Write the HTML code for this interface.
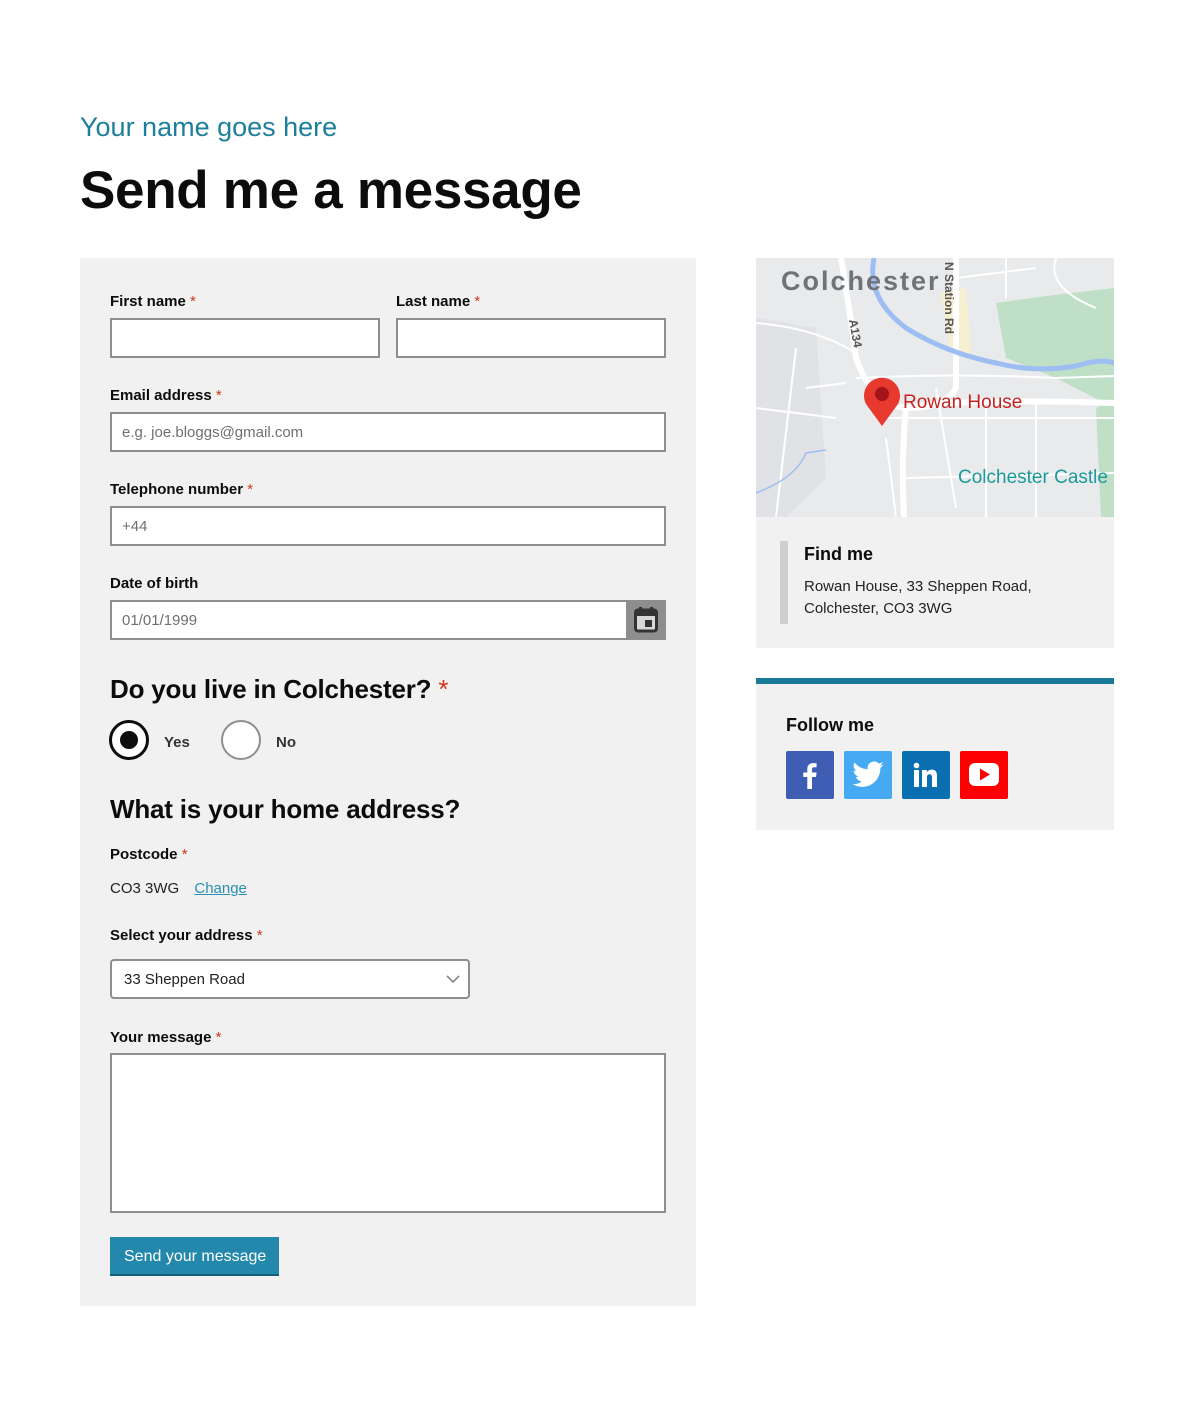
<!DOCTYPE html>
<html><head><meta charset="utf-8"><style>
*{box-sizing:border-box;margin:0;padding:0}
body{width:1194px;height:1410px;background:#fff;font-family:"Liberation Sans",Arial,sans-serif;color:#0b0c0c;position:relative;overflow:hidden}
.a{position:absolute}
.lbl{position:absolute;font-size:15px;font-weight:bold;color:#0b0c0c;margin-top:1px}
.lbl b{color:#d4351c;font-weight:normal}
.inp{position:absolute;background:#fff;border:2px solid #8e8e8e;height:40px;font-size:15px;color:#6f6f6f;padding:10px 0 0 10px}
</style></head><body>
<div class="a" style="left:80px;top:112px;font-size:27px;color:#1d7f9c">Your name goes here</div>
<div class="a" style="left:80px;top:160px;font-size:53px;font-weight:bold;letter-spacing:-0.3px">Send me a message</div>

<div class="a" style="left:80px;top:258px;width:616px;height:1048px;background:#f1f1f1"></div>
<div class="lbl" style="left:110px;top:292px">First name <b>*</b></div>
<div class="lbl" style="left:396px;top:292px">Last name <b>*</b></div>
<div class="inp" style="left:110px;top:318px;width:270px"></div>
<div class="inp" style="left:396px;top:318px;width:270px"></div>
<div class="lbl" style="left:110px;top:386px">Email address <b>*</b></div>
<div class="inp" style="left:110px;top:412px;width:556px">e.g. joe.bloggs@gmail.com</div>
<div class="lbl" style="left:110px;top:480px">Telephone number <b>*</b></div>
<div class="inp" style="left:110px;top:506px;width:556px">+44</div>
<div class="lbl" style="left:110px;top:574px">Date of birth</div>
<div class="inp" style="left:110px;top:600px;width:556px">01/01/1999</div>
<div class="a" style="left:626px;top:600px;width:40px;height:40px;background:#8e8e8e">
<svg width="40" height="40" viewBox="0 0 40 40"><rect x="9.5" y="10" width="21" height="21" rx="2.5" fill="#d8d8d8" stroke="#333" stroke-width="3"/><rect x="9.5" y="10" width="21" height="6" fill="#333"/><rect x="13" y="7" width="3" height="5" fill="#333"/><rect x="24" y="7" width="3" height="5" fill="#333"/><rect x="19" y="20" width="7" height="7" fill="#333"/></svg></div>

<div class="a" style="left:110px;top:674px;font-size:26px;font-weight:bold;letter-spacing:-0.2px">Do you live in Colchester? <span style="color:#d4351c;font-weight:normal">*</span></div>
<div class="a" style="left:109px;top:720px;width:40px;height:40px;border-radius:50%;border:3px solid #0b0c0c;background:#fff"><div class="a" style="left:8px;top:8px;width:18px;height:18px;border-radius:50%;background:#0b0c0c"></div></div>
<div class="a" style="left:164px;top:734px;font-size:15px;font-weight:bold;color:#333">Yes</div>
<div class="a" style="left:221px;top:720px;width:40px;height:40px;border-radius:50%;border:2px solid #8e8e8e;background:#fff"></div>
<div class="a" style="left:276px;top:734px;font-size:15px;font-weight:bold;color:#333">No</div>

<div class="a" style="left:110px;top:794px;font-size:26px;font-weight:bold;letter-spacing:-0.2px">What is your home address?</div>
<div class="lbl" style="left:110px;top:845px">Postcode <b>*</b></div>
<div class="a" style="left:110px;top:880px;font-size:15px;color:#222">CO3 3WG <span style="margin-left:11px;color:#2a8fb2;text-decoration:underline">Change</span></div>
<div class="lbl" style="left:110px;top:926px">Select your address <b>*</b></div>
<div class="inp" style="left:110px;top:959px;width:360px;border-radius:4px;color:#222;padding-left:12px">33 Sheppen Road
<svg class="a" style="right:8px;top:13px" width="14" height="10"><path d="M1 2l6 6 6-6" fill="none" stroke="#888" stroke-width="1.6"/></svg></div>
<div class="lbl" style="left:110px;top:1028px">Your message <b>*</b></div>
<div class="inp" style="left:110px;top:1053px;width:556px;height:160px"></div>
<div class="a" style="left:110px;top:1237px;width:169px;height:39px;background:#2388ab;border-bottom:2px solid #135d78;color:#fff;font-size:16px;padding:11px 0 0 14px">Send your message</div>

<!-- map -->
<div class="a" style="left:756px;top:258px;width:358px;height:390px;background:#f1f1f1"></div>
<svg class="a" style="left:756px;top:258px" width="358" height="259" viewBox="0 0 358 259">
<rect width="358" height="259" fill="#e9eaec"/>
<path d="M240 45L290 38L358 30V150L300 120L250 100Z" fill="#bfe0c6"/>
<path d="M340 150L358 140V259H345Z" fill="#bfe0c6"/>
<path d="M0 60L60 70L70 220L30 259H0Z" fill="#e1e2e5"/>
<path d="M185 35L210 30L215 95L195 95Z" fill="#f6efd0"/>
<g fill="none" stroke="#fff" stroke-width="2">
<path d="M0 65Q60 70 100 95M40 90L20 259M100 120Q200 115 300 120L358 118M120 160H358M150 220L358 215M50 130L90 125M130 180L140 259M230 150V259M280 140V259M300 0Q290 30 340 50M250 0V40M200 20L280 10M0 150L80 160M180 130L200 250"/>
</g>
<g fill="none" stroke="#fff" stroke-width="6">
<path d="M85 0Q95 60 100 100Q115 145 150 150Q190 150 200 130V0M150 150Q145 200 148 259M150 150Q200 140 358 145"/>
</g>
<path d="M118 0Q110 40 150 70Q190 95 240 105Q280 115 320 108Q345 100 358 105" fill="none" stroke="#9ebef3" stroke-width="5"/>
<path d="M0 235Q40 220 50 195L70 192" fill="none" stroke="#9ebef3" stroke-width="1.5"/>
<text x="25" y="32" font-size="27" fill="#6f7378" letter-spacing="2" font-family="Liberation Sans" font-weight="bold">Colchester</text>
<text transform="translate(189,4) rotate(90)" font-size="12" fill="#555" font-weight="bold" font-family="Liberation Sans">N Station Rd</text>
<text transform="translate(93,62) rotate(80)" font-size="12" fill="#555" font-weight="bold" font-family="Liberation Sans">A134</text>
<path d="M126 168L110 146A18 18 0 1 1 142 146Z" fill="#e8392f"/>
<circle cx="126" cy="136" r="7" fill="#a4141a"/>
<text x="147" y="150" font-size="19" fill="#c5221f" font-family="Liberation Sans">Rowan House</text>
<text x="202" y="225" font-size="19" fill="#1a9a9a" font-family="Liberation Sans">Colchester Castle</text>
</svg>
<div class="a" style="left:780px;top:541px;width:8px;height:83px;background:#cfcfcf"></div>
<div class="a" style="left:804px;top:544px;font-size:18px;font-weight:bold">Find me</div>
<div class="a" style="left:804px;top:576px;font-size:15px;line-height:22px;color:#222">Rowan House, 33 Sheppen Road,<br>Colchester, CO3 3WG</div>

<div class="a" style="left:756px;top:678px;width:358px;height:152px;background:#f1f1f1;border-top:6px solid #1a7a98"></div>
<div class="a" style="left:786px;top:715px;font-size:18px;font-weight:bold">Follow me</div>
<div class="a" style="left:786px;top:751px;width:48px;height:48px;background:#405db4;border-radius:2px"><svg width="48" height="48"><path d="M26 38V26h4l.6-4.5H26v-3c0-1.3.4-2.2 2.2-2.2h2.4v-4c-.4 0-1.8-.2-3.5-.2-3.5 0-5.8 2.1-5.8 6v3.4h-4V26h4v12z" fill="#fff"/></svg></div>
<div class="a" style="left:844px;top:751px;width:48px;height:48px;background:#45aaf1;border-radius:2px"><svg width="48" height="48" viewBox="0 0 24 24"><g transform="translate(3.5 3.5) scale(.71)"><path d="M23 4.6c-.8.4-1.7.6-2.6.7.9-.6 1.6-1.4 2-2.5-.9.5-1.9.9-2.900 1.1A4.5 4.5 0 0 0 11.8 8 12.8 12.8 0 0 1 2.5 3.3a4.5 4.5 0 0 0 1.4 6c-.7 0-1.4-.2-2-.6 0 2.200 1.600 4 3.600 4.500-.7.2-1.4.2-2 .1.6 1.8 2.2 3.1 4.2 3.1A9 9 0 0 1 1 18.300 12.8 12.8 0 0 0 7.900 20.300c8.300 0 12.800-6.900 12.800-12.800v-.6c.9-.6 1.6-1.4 2.3-2.3z" fill="#fff"/></g></svg></div>
<div class="a" style="left:902px;top:751px;width:48px;height:48px;background:#0a6fb0;border-radius:2px"><svg width="48" height="48"><circle cx="14.5" cy="14.5" r="2.8" fill="#fff"/><rect x="12" y="19" width="5" height="17" fill="#fff"/><path d="M20 19h4.8v2.4c.8-1.5 2.5-2.8 5-2.8 4.3 0 5.2 2.8 5.2 6.5V36h-5v-9c0-2-.2-3.8-2.4-3.8s-2.6 1.7-2.6 3.7V36h-5z" fill="#fff"/></svg></div>
<div class="a" style="left:960px;top:751px;width:48px;height:48px;background:#fe0000;border-radius:2px"><svg width="48" height="48"><rect x="9" y="12" width="30" height="23" rx="6" fill="#fff"/><path d="M20 17.5v12l10-6z" fill="#fe0000"/></svg></div>
</body></html>
